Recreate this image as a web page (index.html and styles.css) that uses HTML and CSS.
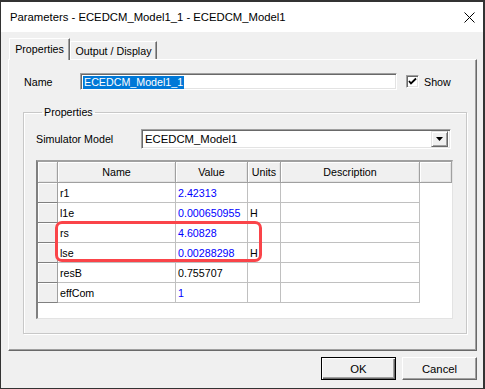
FILE: index.html
```html
<!DOCTYPE html>
<html>
<head>
<meta charset="utf-8">
<link rel="stylesheet" href="styles.css">
</head>
<body>
<div class="window">
  <div class="titlebar">
    <span class="title">Parameters - ECEDCM_Model1_1 - ECEDCM_Model1</span>
    <svg class="close" width="11" height="11" viewBox="0 0 11 11"><path d="M0.5 0.5 L10.5 10.5 M10.5 0.5 L0.5 10.5" stroke="#000" stroke-width="1" fill="none"/></svg>
  </div>
  <div class="client">
    <div class="tabs">
      <div class="tab active">Properties</div>
      <div class="tab">Output / Display</div>
    </div>
    <div class="panel">
      <div class="name-row">
        <span class="lbl name-lbl">Name</span>
        <div class="sunken name-input"><span class="sel">ECEDCM_Model1_1</span></div>
        <div class="check">
          <svg width="9" height="9" viewBox="0 0 9 9"><path d="M1 4 L3 6.5 L8 1.5" stroke="#000" stroke-width="1.8" fill="none"/></svg>
        </div>
        <span class="lbl">Show</span>
      </div>
      <fieldset class="group">
        <legend>Properties</legend>
        <div class="sim-row">
          <span class="lbl sim-lbl">Simulator Model</span>
          <div class="sunken combo">
            <span class="combo-text">ECEDCM_Model1</span>
            <div class="drop"><svg width="7" height="4" viewBox="0 0 7 4"><path d="M0 0 H7 L3.5 4 Z" fill="#000"/></svg></div>
          </div>
        </div>
        <div class="grid">
          <div class="grow ghead">
            <div class="c rh"></div><div class="c cn">Name</div><div class="c cv">Value</div><div class="c cu">Units</div><div class="c cd">Description</div><div class="c cx"></div>
          </div>
          <div class="grow"><div class="c rh"></div><div class="c cn">r1</div><div class="c cv val">2.42313</div><div class="c cu"></div><div class="c cd"></div></div>
          <div class="grow"><div class="c rh"></div><div class="c cn">l1e</div><div class="c cv val">0.000650955</div><div class="c cu">H</div><div class="c cd"></div></div>
          <div class="grow"><div class="c rh"></div><div class="c cn">rs</div><div class="c cv val">4.60828</div><div class="c cu"></div><div class="c cd"></div></div>
          <div class="grow"><div class="c rh"></div><div class="c cn">lse</div><div class="c cv val">0.00288298</div><div class="c cu">H</div><div class="c cd"></div></div>
          <div class="grow"><div class="c rh"></div><div class="c cn">resB</div><div class="c cv">0.755707</div><div class="c cu"></div><div class="c cd"></div></div>
          <div class="grow"><div class="c rh"></div><div class="c cn">effCom</div><div class="c cv val">1</div><div class="c cu"></div><div class="c cd"></div></div>
          <div class="mark"></div>
        </div>
      </fieldset>
    </div>
    <div class="buttons">
      <div class="btn default">OK</div>
      <div class="btn">Cancel</div>
    </div>
  </div>
</div>
</body>
</html>
```
FILE: styles.css
```css
body {
  margin: 0;
  background: #2b2b2b;
  font-family: "Liberation Sans", Arial, sans-serif;
  font-size: 10.7px;
  color: #000;
}
.window {
  width: 485px;
  height: 389px;
  box-sizing: border-box;
  border-style: solid;
  border-color: #333;
  border-width: 2px 2px 1px 1px;
  background: #f0f0f0;
  display: flex;
  flex-direction: column;
}
.titlebar {
  height: 30px;
  background: #fff;
  display: flex;
  align-items: center;
  justify-content: space-between;
  padding: 0 8px 0 9px;
  font-size: 11.3px;
  flex: none;
}
.close { display: block; margin-top: 1px; }
.client {
  flex: 1;
  padding: 6px 6px 0 7px;
}
.tabs {
  display: flex;
  align-items: flex-end;
  height: 21px;
  padding-left: 1px;
}
.tab {
  box-sizing: border-box;
  height: 18px;
  width: 87px;
  border-style: solid;
  border-width: 1px 1px 0 1px;
  border-color: #fff #696969 #fff #fff;
  box-shadow: inset -1px 0 #a0a0a0;
  display: flex;
  align-items: center;
  justify-content: center;
  padding-top: 1px;
}
.tab.active {
  width: 61px;
  height: 22px;
  margin-bottom: -1px;
  background: #f0f0f0;
  position: relative;
  z-index: 1;
  padding-bottom: 2px;
}
.panel {
  box-sizing: border-box;
  width: 469px;
  height: 292px;
  border-style: solid;
  border-width: 1px;
  border-color: #fff #696969 #696969 #fff;
  box-shadow: inset -1px -1px #a0a0a0;
  padding: 13px 0 0 14px;
}
.name-row {
  display: flex;
  align-items: center;
  height: 17px;
}
.name-lbl { width: 57px; padding-left: 1px; box-sizing: border-box; }
.sunken {
  box-sizing: border-box;
  background: #fff;
  border-style: solid;
  border-width: 1px;
  border-color: #a0a0a0 #fff #fff #a0a0a0;
  box-shadow: inset 1px 1px #696969, inset -1px -1px #e3e3e3;
}
.name-input {
  width: 317px;
  height: 17px;
  padding: 2px 0 0 2px;
  display: flex;
  align-items: flex-start;
}
.sel {
  background: #0078d7;
  color: #fff;
  height: 13px;
  line-height: 13px;
  padding: 0 1px;
}
.check {
  width: 13px;
  height: 13px;
  box-sizing: border-box;
  margin-left: 9px;
  margin-right: 5px;
  background: #fff;
  border-style: solid;
  border-width: 1px;
  border-color: #a0a0a0 #fff #fff #a0a0a0;
  box-shadow: inset 1px 1px #696969, inset -1px -1px #e3e3e3;
  display: flex;
  align-items: center;
  justify-content: center;
}
.check svg { display: block; }
.group {
  margin: 16px 0 0 0;
  padding: 11px 0 0 12px;
  width: 444px;
  height: 228px;
  box-sizing: border-box;
  border: 1px solid #c8c8c8;
  box-shadow: inset 1px 1px #fff, 1px 1px #fff;
}
.group legend {
  padding: 0 2px;
  margin-left: 6px;
  line-height: 12px;
}
.sim-row {
  display: flex;
  align-items: center;
  height: 20px;
}
.sim-lbl { width: 105px; }
.combo {
  width: 310px;
  height: 20px;
  display: flex;
  align-items: center;
  justify-content: space-between;
  padding: 0 2px 0 3px;
}
.combo-text { font-size: 11.3px; }
.drop {
  width: 17px;
  height: 16px;
  box-sizing: border-box;
  background: #f0f0f0;
  border-style: solid;
  border-width: 1px;
  border-color: #e3e3e3 #696969 #696969 #e3e3e3;
  box-shadow: inset 1px 1px #fff, inset -1px -1px #a0a0a0;
  display: flex;
  align-items: center;
  justify-content: center;
}
.drop svg { display: block; }
.grid {
  position: relative;
  margin-top: 11px;
  width: 417px;
  height: 159px;
  box-sizing: border-box;
  background: #fff;
  border-style: solid;
  border-width: 2px 1px 1px 2px;
  border-color: #a0a0a0 #e3e3e3 #e3e3e3 #808080;
}
.grow {
  display: flex;
  height: 20px;
}
.grow.ghead { height: 21px; }
.c {
  box-sizing: border-box;
  border-right: 1px solid #c0c0c0;
  border-bottom: 1px solid #c0c0c0;
  padding-left: 2px;
  display: flex;
  align-items: center;
  white-space: nowrap;
  overflow: hidden;
  flex: none;
}
.rh {
  width: 20px;
  background: #f0f0f0;
  border-right-color: #a0a0a0;
  border-bottom-color: #808080;
  box-shadow: inset 1px 1px #fff;
}
.cn { width: 118px; }
.cv { width: 72px; }
.cu { width: 33px; }
.cd { width: 139px; }
.cx { width: 32px; }
.ghead .c {
  background: #f0f0f0;
  justify-content: center;
  padding-left: 0;
  border-right-color: #a0a0a0;
  border-bottom-color: #a0a0a0;
  box-shadow: inset 1px 1px #fff, inset -1px -1px #e3e3e3;
}
.val { color: #0000ff; }
.mark {
  position: absolute;
  left: 17px;
  top: 59px;
  width: 207px;
  height: 41px;
  box-sizing: border-box;
  border: 3px solid #fa4449;
  border-radius: 7px;
}
.buttons {
  display: flex;
  justify-content: flex-end;
  gap: 6px;
  margin-top: 6px;
  padding-right: 0;
}
.btn {
  width: 75px;
  height: 23px;
  box-sizing: border-box;
  background: #f0f0f0;
  border-style: solid;
  border-width: 1px;
  border-color: #fff #696969 #696969 #fff;
  box-shadow: inset -1px -1px #a0a0a0;
  display: flex;
  align-items: center;
  justify-content: center;
  font-size: 11.3px;
}
.btn.default {
  border-color: #000;
  box-shadow: inset 1px 1px #fff, inset -1px -1px #696969, inset -2px -2px #a0a0a0;
}
```
